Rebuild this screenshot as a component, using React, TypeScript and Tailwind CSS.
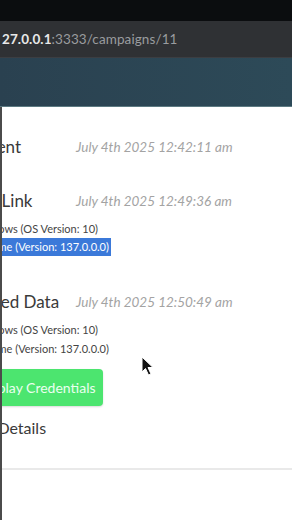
export default function App() {
  return (
    <div className="w-[292px] h-[520px] overflow-hidden bg-white flex flex-col font-['Lato',sans-serif]">
      {/* browser chrome */}
      <div className="h-[21px] bg-[#0b0d0f]" />
      <div className="h-[37px] bg-[#2f3134] border-b border-[#3c3e42] flex items-center pl-[2px] text-[13.5px] tracking-[0.1px]">
        <span className="text-[#e8e8e8] font-bold">27.0.0.1</span>
        <span className="text-[#9a9c9f]">:3333/campaigns/11</span>
      </div>
      <div className="h-[49px] bg-gradient-to-r from-[#2a4150] to-[#2d4a58] border-b border-[#5d7a82]" />

      {/* page */}
      <div className="relative flex-1 border-l-2 border-[#4b4b4b] overflow-hidden">
        <div className="flex flex-col pt-[30px] -ml-[62px]">
          <TimelineRow label="Email Sent" date="July 4th 2025 12:42:11 am" />

          <div className="mt-[34px]">
            <TimelineRow label="Clicked Link" date="July 4th 2025 12:49:36 am" />
          </div>
          <div className="mt-[9px] h-[18px] flex items-center ml-[32px] text-[11px] text-[#444] whitespace-nowrap">
            Windows (OS Version: 10)
          </div>
          <div className="h-[18px] flex items-center ml-[34px]">
            <span className="bg-[#3b79d9] text-white text-[11px] pr-[2px] leading-[18px] whitespace-nowrap">
              Chrome (Version: 137.0.0.0)
            </span>
          </div>

          <div className="mt-[36px]">
            <TimelineRow label="Submitted Data" date="July 4th 2025 12:50:49 am" />
          </div>
          <div className="mt-[9px] h-[18px] flex items-center ml-[32px] text-[11px] text-[#444] whitespace-nowrap">
            Windows (OS Version: 10)
          </div>
          <div className="mt-[1px] h-[18px] flex items-center ml-[34px] text-[11px] text-[#444] whitespace-nowrap">
            Chrome (Version: 137.0.0.0)
          </div>

          <div className="mt-[11px] ml-[30px] w-[133px] h-[37px] rounded-[4px] bg-[#4ce56f] flex items-center pl-[12px] text-[14px] text-[#eafff0] whitespace-nowrap shadow-[0_1px_2px_rgba(0,0,0,0.15)]">
            Replay Credentials
          </div>

          <div className="mt-[12px] h-[20px] flex items-center ml-[18px] text-[16px] text-[#3a3a3a] whitespace-nowrap">
            View Details
          </div>

          <div className="mt-[30px] h-[2px] bg-[#e9e9e9]" />
        </div>

        {/* mouse pointer */}
        <svg className="absolute left-[139px] top-[249px]" width="14" height="20" viewBox="0 0 14 20">
          <path d="M1 1 L1 16 L4.5 12.5 L7.5 19 L10 18 L7 11.5 L12 11.5 Z" fill="#111" stroke="#fff" strokeWidth="1" />
        </svg>
      </div>
    </div>
  );
}

function TimelineRow({ label, date }: { label: string; date: string }) {
  return (
    <div className="h-[20px] flex items-center whitespace-nowrap">
      <span className="text-[17px] text-[#3a3a3a] w-[136px] shrink-0 pl-[3px]">{label}</span>
      <span className="text-[13.5px] italic text-[#a3a3a3]">{date}</span>
    </div>
  );
}
